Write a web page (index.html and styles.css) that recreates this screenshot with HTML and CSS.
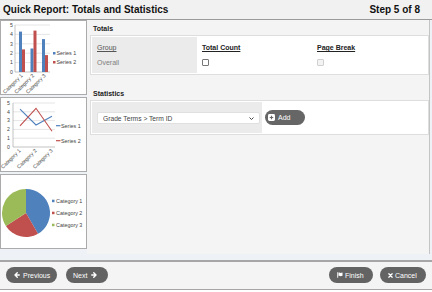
FILE: index.html
```html
<!DOCTYPE html>
<html lang="en">
<head>
    <meta charset="UTF-8">
    <meta name="viewport" content="width=device-width, initial-scale=1.0">
    <title>Quick Report</title>
    <link rel="stylesheet" href="styles.css">
</head>
<body>
    <header class="topbar">
        <h1>Quick Report: Totals and Statistics</h1>
        <span class="step">Step 5 of 8</span>
    </header>

    <div class="wrap">
        <aside class="thumbs">
            <div class="thumb">
                <svg width="85" height="73" viewBox="0 0 85 73">
                    <g class="grid">
                        <line x1="14" y1="4" x2="49" y2="4"/>
                        <line x1="14" y1="13.4" x2="49" y2="13.4"/>
                        <line x1="14" y1="22.8" x2="49" y2="22.8"/>
                        <line x1="14" y1="32.2" x2="49" y2="32.2"/>
                        <line x1="14" y1="41.6" x2="49" y2="41.6"/>
                    </g>
                    <g class="axis">
                        <line x1="14" y1="4" x2="14" y2="51"/>
                        <line x1="14" y1="51" x2="49" y2="51"/>
                    </g>
                    <g class="lbl">
                        <text x="12" y="5.8">5</text>
                        <text x="12" y="15.2">4</text>
                        <text x="12" y="24.6">3</text>
                        <text x="12" y="34">2</text>
                        <text x="12" y="43.4">1</text>
                        <text x="12" y="52.8">0</text>
                    </g>
                    <rect x="18" y="10.6" width="3" height="40.4" fill="#4f81bd"/>
                    <rect x="21" y="28.4" width="3" height="22.6" fill="#c0504d"/>
                    <rect x="29.5" y="27.5" width="3" height="23.5" fill="#4f81bd"/>
                    <rect x="32.5" y="9.6" width="3" height="41.4" fill="#c0504d"/>
                    <rect x="41" y="18.1" width="3" height="32.9" fill="#4f81bd"/>
                    <rect x="44" y="34.1" width="3" height="16.9" fill="#c0504d"/>
                    <g class="lbl">
                        <text x="22" y="55" transform="rotate(-45 22 55)">Category 1</text>
                        <text x="33.5" y="55" transform="rotate(-45 33.5 55)">Category 2</text>
                        <text x="45" y="55" transform="rotate(-45 45 55)">Category 3</text>
                    </g>
                    <rect x="52" y="31" width="2.5" height="2.5" fill="#4f81bd"/>
                    <text class="leg" x="55.5" y="34">Series 1</text>
                    <rect x="52" y="40" width="2.5" height="2.5" fill="#c0504d"/>
                    <text class="leg" x="55.5" y="43">Series 2</text>
                </svg>
            </div>
            <div class="thumb">
                <svg width="85" height="73" viewBox="0 0 85 73">
                    <g class="grid">
                        <line x1="12" y1="5" x2="54" y2="5"/>
                        <line x1="12" y1="13.8" x2="54" y2="13.8"/>
                        <line x1="12" y1="22.6" x2="54" y2="22.6"/>
                        <line x1="12" y1="31.4" x2="54" y2="31.4"/>
                        <line x1="12" y1="40.2" x2="54" y2="40.2"/>
                    </g>
                    <g class="axis">
                        <line x1="12" y1="5" x2="12" y2="49"/>
                        <line x1="12" y1="49" x2="54" y2="49"/>
                    </g>
                    <g class="lbl">
                        <text x="9" y="6.8">5</text>
                        <text x="9" y="15.6">4</text>
                        <text x="9" y="24.4">3</text>
                        <text x="9" y="33.2">2</text>
                        <text x="9" y="42">1</text>
                        <text x="9" y="50.8">0</text>
                    </g>
                    <polyline class="ln" points="19,11.2 35,27 51,18.2" stroke="#4f81bd"/>
                    <polyline class="ln" points="19,27.9 35,10.3 51,33.2" stroke="#c0504d"/>
                    <g class="lbl">
                        <text x="20" y="53" transform="rotate(-45 20 53)">Category 1</text>
                        <text x="36" y="53" transform="rotate(-45 36 53)">Category 2</text>
                        <text x="52" y="53" transform="rotate(-45 52 53)">Category 3</text>
                    </g>
                    <line x1="55" y1="27.7" x2="59.5" y2="27.7" stroke="#4f81bd" stroke-width="1.2"/>
                    <text class="leg" x="60" y="29.5">Series 1</text>
                    <line x1="55" y1="42.7" x2="59.5" y2="42.7" stroke="#c0504d" stroke-width="1.2"/>
                    <text class="leg" x="60" y="44.5">Series 2</text>
                </svg>
            </div>
            <div class="thumb">
                <svg width="85" height="73" viewBox="0 0 85 73">
                    <path d="M25 38 L25 14 A24 24 0 0 1 37 58.78 Z" fill="#4f81bd"/>
                    <path d="M25 38 L37 58.78 A24 24 0 0 1 4.87 51.07 Z" fill="#c0504d"/>
                    <path d="M25 38 L4.87 51.07 A24 24 0 0 1 25 14 Z" fill="#9bbb59"/>
                    <rect x="51" y="24.7" width="2.5" height="2.5" fill="#4f81bd"/>
                    <text class="leg" x="55" y="27.8">Category 1</text>
                    <rect x="51" y="36.7" width="2.5" height="2.5" fill="#c0504d"/>
                    <text class="leg" x="55" y="39.8">Category 2</text>
                    <rect x="51" y="48.7" width="2.5" height="2.5" fill="#9bbb59"/>
                    <text class="leg" x="55" y="51.8">Category 3</text>
                </svg>
            </div>
        </aside>

        <main class="content">
            <h2>Totals</h2>
            <div class="box">
                <div class="cell cell-gray cell-group">
                    <div class="row"><span class="link">Group</span></div>
                    <div class="row muted">Overall</div>
                </div>
                <div class="cell cell-col">
                    <div class="row"><span class="hd">Total Count</span></div>
                    <div class="row"><input type="checkbox" class="chk"></div>
                </div>
                <div class="cell cell-col">
                    <div class="row"><span class="hd">Page Break</span></div>
                    <div class="row"><input type="checkbox" class="chk" disabled></div>
                </div>
            </div>

            <h2 class="sec">Statistics</h2>
            <div class="box">
                <div class="cell cell-gray cell-select">
                    <div class="select-wrap">
                        <select class="select">
                            <option>Grade Terms &gt; Term ID</option>
                        </select>
                        <svg class="chev" width="5" height="3" viewBox="0 0 10 6"><path d="M1 1l4 4 4-4" fill="none" stroke="#333" stroke-width="1.8"/></svg>
                    </div>
                </div>
                <div class="cell cell-add">
                    <button class="btn btn-add" type="button">
                        <svg width="7" height="7" viewBox="0 0 12 12"><rect width="12" height="12" rx="2.5" fill="#fff"/><path d="M6 3v6M3 6h6" stroke="#666" stroke-width="2"/></svg>
                        Add
                    </button>
                </div>
            </div>
        </main>
    </div>

    <footer class="actions">
        <div class="group">
            <button class="btn btn-prev" type="button">
                <svg width="6" height="6" viewBox="0 0 12 12"><path d="M6.5 1.5 2 6l4.5 4.5M2.5 6H10.5" fill="none" stroke="#fff" stroke-width="2.8" stroke-linecap="round" stroke-linejoin="round"/></svg>
                Previous
            </button>
            <button class="btn btn-next" type="button">
                Next
                <svg width="6" height="6" viewBox="0 0 12 12"><path d="M5.5 1.5 10 6l-4.5 4.5M9.5 6H1.5" fill="none" stroke="#fff" stroke-width="2.8" stroke-linecap="round" stroke-linejoin="round"/></svg>
            </button>
        </div>
        <div class="group group-right">
            <button class="btn btn-finish" type="button">
                <svg width="6" height="6" viewBox="0 0 12 12"><rect x="0.5" y="0.5" width="1.8" height="11" fill="#fff"/><path d="M3 1.5c2-1 4 1 6 0l2-.5v6.5l-2 .5c-2 1-4-1-6 0z" fill="#fff"/></svg>
                Finish
            </button>
            <button class="btn btn-cancel" type="button">
                <svg width="5" height="5" viewBox="0 0 12 12"><path d="M2 2l8 8M10 2l-8 8" fill="none" stroke="#fff" stroke-width="3.2" stroke-linecap="round"/></svg>
                Cancel
            </button>
        </div>
    </footer>
</body>
</html>
```

FILE: styles.css
```css
body {
    margin: 0;
    font-family: "Liberation Sans", Arial, sans-serif;
    font-size: 7px;
    color: #333;
    background: #fff;
}
.topbar {
    display: flex;
    justify-content: space-between;
    align-items: center;
    height: 19px;
    padding: 0 12px 0 3px;
    background: #f1f1f1;
    border-bottom: 1px solid #9a9a9a;
}
.topbar h1, .topbar .step {
    margin: 0;
    font-size: 10px;
    font-weight: bold;
    color: #111;
}
.wrap {
    display: flex;
    height: 240px;
    background: #eef2f6;
}
.thumbs {
    width: 87px;
    display: flex;
    flex-direction: column;
    gap: 2px;
}
.thumb {
    height: 73px;
    border: 1px solid #ababab;
    background: #fff;
}
.thumb svg {
    display: block;
    font-family: "Liberation Sans", Arial, sans-serif;
}
.thumb .grid line {
    stroke: #d4d4d4;
    stroke-width: 0.6;
}
.thumb .axis line {
    stroke: #9a9a9a;
    stroke-width: 0.6;
}
.thumb .lbl text {
    font-size: 5.2px;
    fill: #444;
    text-anchor: end;
}
.thumb .leg {
    font-size: 5.4px;
    fill: #444;
}
.thumb .ln {
    fill: none;
    stroke-width: 1.1;
}
.content {
    flex: 1;
    display: flex;
    flex-direction: column;
    padding: 4px 0 0 3px;
    margin: 0 4px 6px 0;
    background: #f4f4f4;
    border-right: 1px solid #c4c4c4;
}
.content h2 {
    margin: 0 0 2px;
    padding-left: 3px;
    font-size: 7px;
    line-height: 9px;
    font-weight: bold;
    color: #222;
}
.content h2.sec {
    margin-top: 14px;
}
.box {
    display: flex;
    padding: 1px;
    background: #fff;
    border: 1px solid #dedede;
}
.cell {
    box-sizing: border-box;
    display: flex;
    flex-direction: column;
    gap: 6px;
    padding: 6px 5px;
}
.cell-gray {
    background: #ebebeb;
}
.cell-group {
    width: 105px;
}
.cell-col {
    width: 115px;
}
.row {
    height: 9px;
    line-height: 9px;
    display: flex;
    align-items: center;
}
.link {
    color: #555;
    text-decoration: underline;
}
.muted {
    color: #808080;
}
.hd {
    font-weight: bold;
    color: #222;
    text-decoration: underline;
}
.chk {
    appearance: none;
    display: block;
    width: 7px;
    height: 7px;
    margin: 0;
    border: 1px solid #777;
    border-radius: 1px;
    background: #fff;
}
.chk:disabled {
    border-color: #d0d0d0;
    background: #f3f3f3;
}
.cell-select {
    width: 170px;
    padding: 10px 2px 9px 5px;
}
.select-wrap {
    position: relative;
}
.select {
    appearance: none;
    display: block;
    width: 100%;
    height: 12px;
    margin: 0;
    padding: 0 0 0 5px;
    font-family: inherit;
    font-size: 6.7px;
    color: #444;
    background: #fff;
    border: 1px solid #e0e0e0;
    border-radius: 2px;
}
.chev {
    position: absolute;
    right: 6px;
    top: 5px;
}
.cell-add {
    justify-content: center;
    padding: 0 0 0 3px;
}
.btn {
    display: inline-flex;
    align-items: center;
    box-sizing: border-box;
    height: 16px;
    margin: 0;
    border: 0;
    border-radius: 8px;
    background: #636363;
    color: #fff;
    font-family: inherit;
    font-size: 7px;
    cursor: pointer;
}
.btn svg {
    display: block;
}
.btn-add {
    width: 40px;
    height: 15px;
    gap: 3px;
    padding: 0 0 0 3px;
    background: #666;
}
.actions {
    display: flex;
    justify-content: space-between;
    padding: 5px 6px 6px;
    background: #f4f4f4;
    border-top: 2px solid #a6a6a6;
    border-bottom: 1px solid #a6a6a6;
}
.group {
    display: flex;
    gap: 9px;
}
.group-right {
    gap: 7px;
}
.btn-prev {
    width: 51px;
    gap: 3px;
    padding-left: 8px;
}
.btn-next {
    width: 42px;
    gap: 4px;
    padding-left: 7px;
}
.btn-finish {
    width: 44px;
    gap: 2px;
    padding-left: 8px;
}
.btn-cancel {
    width: 46px;
    gap: 2px;
    padding-left: 8px;
}
```
